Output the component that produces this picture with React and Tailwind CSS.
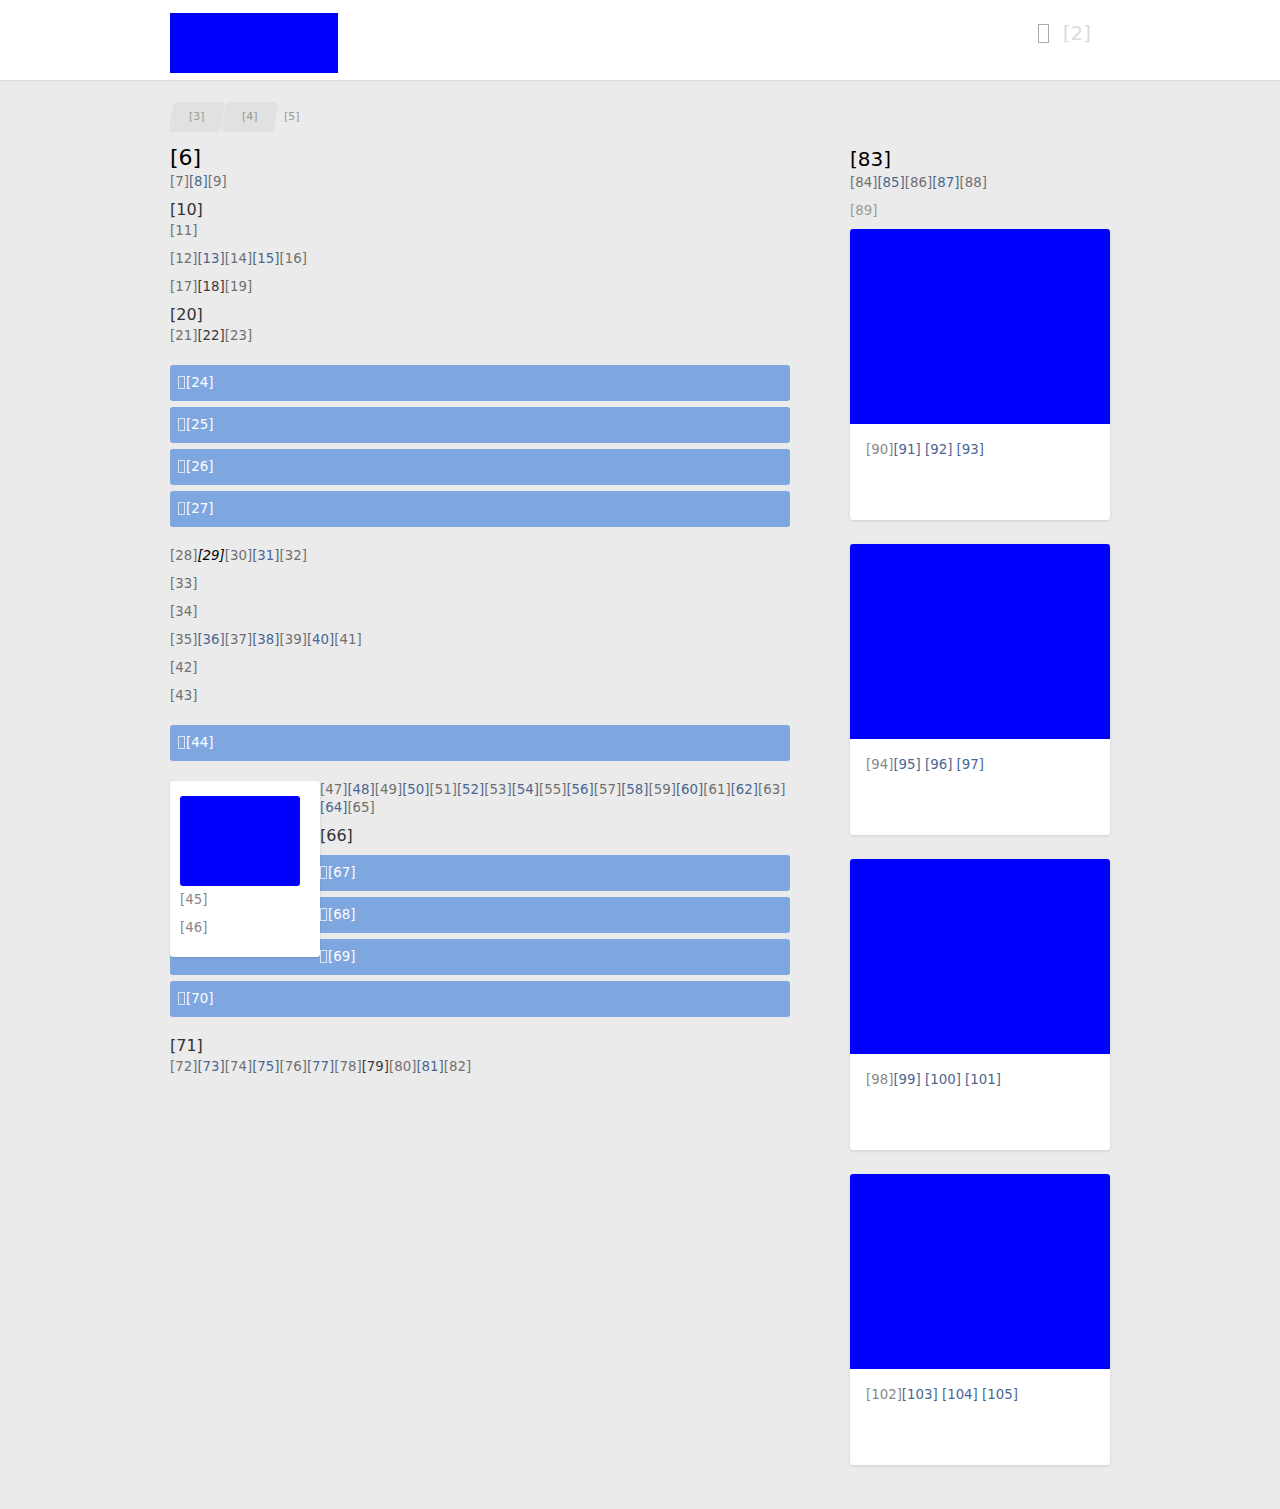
import React from 'react';

const LINK = 'text-[#4a6691]';

// renders a run of bracketed labels; type: 'n' normal, 'l' link, 'd' dark, 'i' italic
const Run = ({ items }) => (
  <>
    {items.map(([n, t], i) => (
      <span
        key={i}
        className={
          t === 'l' ? LINK : t === 'd' ? 'text-[#3a3a3a]' : t === 'i' ? 'text-black italic' : ''
        }
      >
        [{n}]
      </span>
    ))}
  </>
);

const Tofu = ({ className = '' }) => (
  <span className={`inline-block align-[-2px] border ${className}`} />
);

const Bar = ({ label, className = '' }) => (
  <div className={`h-[36px] leading-[36px] bg-[#7da7de] rounded-[3px] pl-[8px] text-white ${className}`}>
    <Tofu className="w-[7px] h-[13px] border-white/70 mr-px" />[{label}]
  </div>
);

const Line = ({ children, className = '' }) => (
  <p className={`leading-[18px] text-[#707070] ${className}`}>{children}</p>
);

const H2 = ({ children, className = '' }) => (
  <h2 className={`text-[16px] leading-[20px] text-[#333] ${className}`}>{children}</h2>
);

const SideCard = ({ a, b, c, d }) => (
  <div className="bg-white rounded-[3px] shadow-[0_1px_3px_rgba(0,0,0,0.12)] overflow-hidden mt-[24px] first:mt-[9px]">
    <div className="h-[195px] bg-[#0000ff]" />
    <div className="h-[96px] px-[16px] pt-[17px] leading-[18px]">
      <span className="text-[#888]">[{a}]</span>
      <span className={LINK}>[{b}] [{c}] [{d}]</span>
    </div>
  </div>
);

export default function App() {
  const longRun = [];
  for (let n = 47; n <= 65; n++) longRun.push([n, n % 2 === 0 ? 'l' : 'n']);

  return (
    <div className="min-h-[1509px] bg-[#ebebeb] text-[13.33px] text-[#707070]" style={{ fontFamily: '"DejaVu Sans", sans-serif' }}>
      <header className="h-[81px] bg-white border-b border-[#dcdcdc]">
        <div className="w-[940px] mx-auto flex items-start justify-between">
          <div className="mt-[13px] w-[168px] h-[60px] bg-[#0000ff]" />
          <div className="mt-[21px] mr-[19px] flex items-center text-[20px] leading-[24px]">
            <Tofu className="w-[11px] h-[19px] border-[#aaa] mr-[14px]" />
            <span className="text-[#dcdcdc]">[2]</span>
          </div>
        </div>
      </header>

      <div className="w-[940px] mx-auto flex gap-[60px] pb-[44px]">
        <main className="w-[620px]">
          <nav className="mt-[21px] h-[30px] flex items-center text-[11px] text-[#999]">
            <span className="ml-[1px] w-[52px] h-[30px] mr-[1px] bg-[#e1e1e1] rounded-[4px] -skew-x-[10deg] flex items-center justify-center">
              <span className="skew-x-[10deg]">[3]</span>
            </span>
            <span className="w-[52px] h-[30px] bg-[#e1e1e1] rounded-[4px] -skew-x-[10deg] flex items-center justify-center">
              <span className="skew-x-[10deg]">[4]</span>
            </span>
            <span className="ml-[8px]">[5]</span>
          </nav>

          <h1 className="mt-[13px] text-[22px] leading-[26px] text-black">[6]</h1>
          <Line className="mt-[2px]"><Run items={[[7, 'n'], [8, 'l'], [9, 'n']]} /></Line>
          <H2 className="mt-[9px]">[10]</H2>
          <Line className="mt-[2px]">[11]</Line>
          <Line className="mt-[10px]"><Run items={[[12, 'n'], [13, 'l'], [14, 'n'], [15, 'l'], [16, 'n']]} /></Line>
          <Line className="mt-[10px]"><Run items={[[17, 'n'], [18, 'd'], [19, 'n']]} /></Line>
          <H2 className="mt-[9px]">[20]</H2>
          <Line className="mt-[2px]"><Run items={[[21, 'n'], [22, 'd'], [23, 'n']]} /></Line>

          <div className="mt-[20px] space-y-[6px]">
            <Bar label={24} />
            <Bar label={25} />
            <Bar label={26} />
            <Bar label={27} />
          </div>

          <Line className="mt-[20px]"><Run items={[[28, 'n'], [29, 'i'], [30, 'n'], [31, 'l'], [32, 'n']]} /></Line>
          <Line className="mt-[10px]">[33]</Line>
          <Line className="mt-[10px]">[34]</Line>
          <Line className="mt-[10px]"><Run items={[[35, 'n'], [36, 'l'], [37, 'n'], [38, 'l'], [39, 'n'], [40, 'l'], [41, 'n']]} /></Line>
          <Line className="mt-[10px]">[42]</Line>
          <Line className="mt-[10px]">[43]</Line>

          <Bar label={44} className="mt-[20px]" />

          <section className="mt-[20px]">
            <div className="float-left w-[150px] bg-white rounded-[3px] shadow-[0_1px_3px_rgba(0,0,0,0.12)] pt-[15px] pl-[10px] pb-[20px]">
              <div className="w-[120px] h-[90px] bg-[#0000ff] rounded-[3px]" />
              <p className="mt-[5px] leading-[18px] text-[#888]">[45]</p>
              <p className="mt-[10px] leading-[18px] text-[#888]">[46]</p>
            </div>
            <Line><Run items={longRun} /></Line>
            <H2 className="mt-[9px]">[66]</H2>
            <div className="mt-[9px] space-y-[6px]">
              <Bar label={67} />
              <Bar label={68} />
              <Bar label={69} />
              <Bar label={70} />
            </div>
            <H2 className="mt-[19px]">[71]</H2>
            <Line className="mt-[2px]">
              <Run items={[[72, 'n'], [73, 'l'], [74, 'n'], [75, 'l'], [76, 'n'], [77, 'l'], [78, 'n'], [79, 'd'], [80, 'n'], [81, 'l'], [82, 'n']]} />
            </Line>
          </section>
        </main>

        <aside className="w-[260px] pt-[66px]">
          <h2 className="text-[20px] leading-[24px] text-black">[83]</h2>
          <Line className="mt-[3px]"><Run items={[[84, 'n'], [85, 'l'], [86, 'n'], [87, 'l'], [88, 'n']]} /></Line>
          <p className="mt-[10px] leading-[18px] text-[#999]">[89]</p>
          <div>
            <SideCard a={90} b={91} c={92} d={93} />
            <SideCard a={94} b={95} c={96} d={97} />
            <SideCard a={98} b={99} c={100} d={101} />
            <SideCard a={102} b={103} c={104} d={105} />
          </div>
        </aside>
      </div>
    </div>
  );
}
